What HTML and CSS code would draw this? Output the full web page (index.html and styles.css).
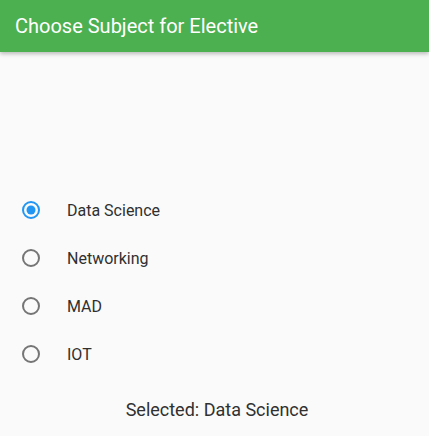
FILE: index.html
```html
<!DOCTYPE html>
<html>
<head>
<meta charset="utf-8">
<link rel="stylesheet" href="styles.css">
</head>
<body>
<header class="appbar"><h1 class="title">Choose Subject for Elective</h1></header>
<main class="content">
  <div class="options">
    <div class="option">
      <svg class="radio" width="20" height="20" viewBox="0 0 20 20"><circle cx="10" cy="10" r="8" fill="none" stroke="#2196F3" stroke-width="2"/><circle cx="10" cy="10" r="4.5" fill="#2196F3"/></svg>
      <span class="label">Data Science</span>
    </div>
    <div class="option">
      <svg class="radio" width="20" height="20" viewBox="0 0 20 20"><circle cx="10" cy="10" r="8" fill="none" stroke="#757575" stroke-width="2"/></svg>
      <span class="label">Networking</span>
    </div>
    <div class="option">
      <svg class="radio" width="20" height="20" viewBox="0 0 20 20"><circle cx="10" cy="10" r="8" fill="none" stroke="#757575" stroke-width="2"/></svg>
      <span class="label">MAD</span>
    </div>
    <div class="option">
      <svg class="radio" width="20" height="20" viewBox="0 0 20 20"><circle cx="10" cy="10" r="8" fill="none" stroke="#757575" stroke-width="2"/></svg>
      <span class="label">IOT</span>
    </div>
  </div>
  <p class="selected">Selected: Data Science</p>
</main>
</body>
</html>
```
FILE: styles.css
```css
html, body {
  margin: 0;
  padding: 0;
  background: #fafafa;
  font-family: Roboto, "Liberation Sans", sans-serif;
  height: 100%;
  overflow: hidden;
}
.appbar {
  height: 52px;
  background: #4caf50;
  display: flex;
  align-items: center;
  padding: 0 15px;
  box-shadow: 0 2px 4px rgba(0,0,0,0.25);
  position: relative;
}
.title {
  margin: 0;
  color: #fff;
  font-size: 20px;
  font-weight: 400;
  letter-spacing: 0;
}
.content {
  padding-top: 134px;
}
.options {
  display: flex;
  flex-direction: column;
}
.option {
  height: 48px;
  display: flex;
  align-items: center;
  padding-left: 21px;
}
.radio {
  flex: none;
}
.label {
  margin-left: 26px;
  font-size: 16px;
  color: #303030;
}
.selected {
  margin: 21px 0 0;
  padding-left: 5px;
  text-align: center;
  font-size: 18px;
  color: #303030;
}
```
